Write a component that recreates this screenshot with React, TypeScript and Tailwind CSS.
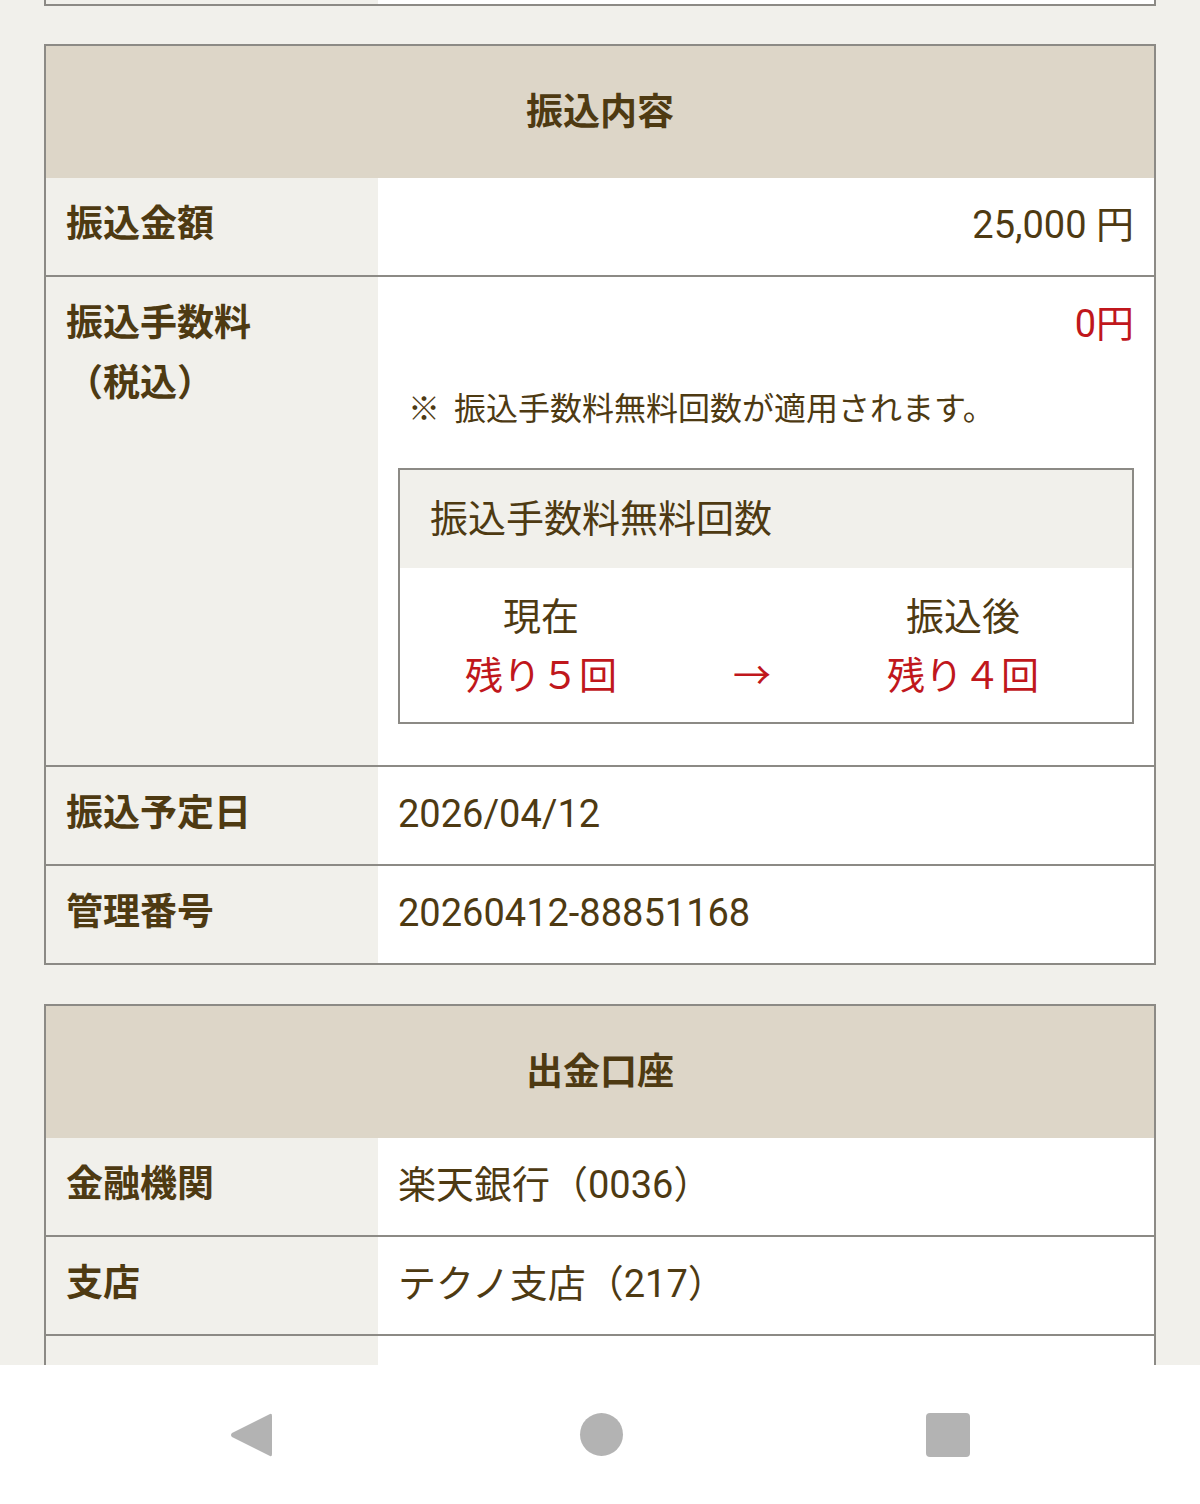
import React from "react";

const font = { fontFamily: '"Roboto", "Noto Sans CJK JP", sans-serif' };

function Row({
  label,
  children,
  first = false,
}: {
  label: React.ReactNode;
  children: React.ReactNode;
  first?: boolean;
}) {
  return (
    <div className={first ? "flex" : "flex border-t-2 border-[#8c8a85]"}>
      <div className="w-[332px] shrink-0 bg-[#f1f0eb] px-[20px] pt-[17px] pb-[20px] text-[37px] font-bold leading-[60px]">
        {label}
      </div>
      <div className="flex-1 bg-white px-[20px] pt-[17px] pb-[20px] text-[38px] leading-[60px]">{children}</div>
    </div>
  );
}

function Section({ title, children }: { title: string; children: React.ReactNode }) {
  return (
    <div className="border-2 border-[#8c8a85]">
      <div className="flex h-[132px] items-center justify-center pt-[2px] bg-[#ddd6c8] text-[37px] font-bold">
        {title}
      </div>
      {children}
    </div>
  );
}

export default function App() {
  return (
    <div className="flex h-[1504px] w-[1200px] flex-col bg-[#f1f0eb] text-[#4e3a12]" style={font}>
      <div className="h-[1365px] overflow-hidden px-[44px]">
        {/* tail of previous table */}
        <div className="flex h-[6px] border-x-2 border-b-2 border-[#8c8a85]">
          <div className="w-[332px] bg-[#f1f0eb]" />
          <div className="flex-1 bg-white" />
        </div>

        <div className="mt-[38px]">
          <Section title="振込内容">
            <Row label="振込金額" first>
              <div className="text-right">25,000 円</div>
            </Row>
            <Row
              label={
                <>
                  <div>振込手数料</div>
                  <div>（税込）</div>
                </>
              }
            >
              <div className="text-right text-[#c0171c]">0円</div>
              <div className="mt-[30px] pl-[10px] text-[32px] leading-[50px]">
                ※<span className="ml-[14px]">振込手数料無料回数が適用されます。</span>
              </div>
              <div className="mt-[34px] mb-[21px] border-2 border-[#8c8a85]">
                <div className="flex h-[98px] items-center bg-[#f1f0eb] pl-[30px] text-[38px]">振込手数料無料回数</div>
                <div className="flex pt-[20px] pb-[16px] text-[38px] leading-[59px]">
                  <div className="flex w-[282px] flex-col items-center">
                    <div>現在</div>
                    <div className="text-[#c0171c]">残り５回</div>
                  </div>
                  <div className="flex w-[140px] flex-col items-center">
                    <div>&nbsp;</div>
                    <div className="text-[#c0171c]">→</div>
                  </div>
                  <div className="flex w-[282px] flex-col items-center">
                    <div>振込後</div>
                    <div className="text-[#c0171c]">残り４回</div>
                  </div>
                </div>
              </div>
            </Row>
            <Row label="振込予定日">2026/04/12</Row>
            <Row label="管理番号">20260412-88851168</Row>
          </Section>
        </div>

        <div className="mt-[39px]">
          <Section title="出金口座">
            <Row label="金融機関" first>
              楽天銀行（0036）
            </Row>
            <Row label="支店">テクノ支店（217）</Row>
            <Row label="">&nbsp;</Row>
          </Section>
        </div>
      </div>

      <div className="flex flex-1 items-center bg-white">
        <div className="flex w-full items-center">
          <div className="flex w-[500px] justify-center pl-[2px]">
            <svg width="44" height="48" viewBox="0 0 44 48">
              <path d="M41 3 Q43 2 43 5 L43 43 Q43 46 41 45 L3 26 Q1 24 3 22 Z" fill="#b3b3b3" />
            </svg>
          </div>
          <div className="flex w-[202px] justify-center">
            <div className="h-[43px] w-[43px] rounded-full bg-[#b3b3b3]" />
          </div>
          <div className="flex w-[492px] justify-center">
            <div className="h-[44px] w-[44px] rounded-[4px] bg-[#b3b3b3]" />
          </div>
        </div>
      </div>
    </div>
  );
}
